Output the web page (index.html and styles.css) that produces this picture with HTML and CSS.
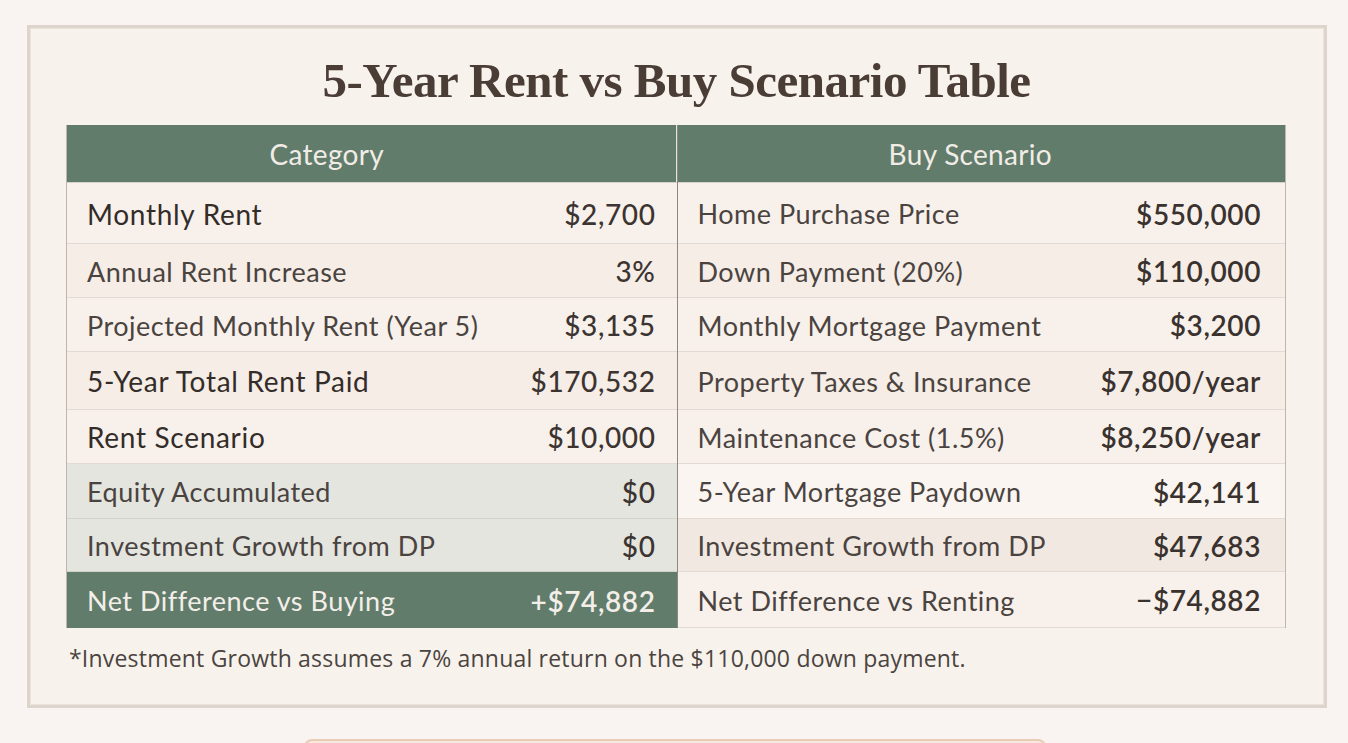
FILE: index.html
```html
<!DOCTYPE html>
<html lang="en">
<head>
<meta charset="utf-8">
<title>5-Year Rent vs Buy Scenario Table</title>
<link rel="stylesheet" href="styles.css">
</head>
<body>
<main class="card">
  <h1 class="title">5-Year Rent vs Buy Scenario Table</h1>
  <div class="table">
    <div class="col col-left">
      <div class="head">Category</div>
      <div class="row h61 strong"><span>Monthly Rent</span><span class="val">$2,700</span></div>
      <div class="row h54 alt"><span>Annual Rent Increase</span><span class="val">3%</span></div>
      <div class="row h54"><span>Projected Monthly Rent (Year 5)</span><span class="val">$3,135</span></div>
      <div class="row h58 strong alt"><span>5-Year Total Rent Paid</span><span class="val">$170,532</span></div>
      <div class="row h54 strong"><span>Rent Scenario</span><span class="val">$10,000</span></div>
      <div class="row h55 sage"><span>Equity Accumulated</span><span class="val">$0</span></div>
      <div class="row h53 sage"><span>Investment Growth from DP</span><span class="val">$0</span></div>
      <div class="row h56 green"><span>Net Difference vs Buying</span><span class="val">+$74,882</span></div>
    </div>
    <div class="col col-right">
      <div class="head">Buy Scenario</div>
      <div class="row h61"><span>Home Purchase Price</span><span class="val">$550,000</span></div>
      <div class="row h54 alt"><span>Down Payment (20%)</span><span class="val">$110,000</span></div>
      <div class="row h54"><span>Monthly Mortgage Payment</span><span class="val">$3,200</span></div>
      <div class="row h58 alt"><span>Property Taxes &amp; Insurance</span><span class="val">$7,800/year</span></div>
      <div class="row h54"><span>Maintenance Cost (1.5%)</span><span class="val">$8,250/year</span></div>
      <div class="row h55 light"><span>5-Year Mortgage Paydown</span><span class="val">$42,141</span></div>
      <div class="row h53 beige"><span>Investment Growth from DP</span><span class="val">$47,683</span></div>
      <div class="row h56"><span>Net Difference vs Renting</span><span class="val">&minus;$74,882</span></div>
    </div>
  </div>
  <p class="note">*Investment Growth assumes a 7% annual return on the $110,000 down payment.</p>
</main>
<div class="next-box"></div>
</body>
</html>
```

FILE: styles.css
```css
* { box-sizing: border-box; }

html, body {
  margin: 0;
  padding: 0;
  background: #f9f4f1;
  height: 743px;
  overflow: hidden;
}

body {
  font-family: Lato, "Open Sans", sans-serif;
  color: #3d3531;
}

.card {
  margin: 25px 0 0 27px;
  width: 1300px;
  height: 683px;
  background: #f8f2ec;
  border: 3px solid #ddd5cc;
  box-shadow: inset 0 0 0 1px #ebe4dc;
  padding: 0 37px 0 36px;
}

.title {
  margin: 0;
  padding-top: 23px;
  height: 97px;
  text-align: center;
  font-family: "Liberation Serif", "Times New Roman", serif;
  font-weight: 700;
  font-size: 49px;
  letter-spacing: -0.5px;
  line-height: 60px;
  color: #4a3d36;
}

.table {
  display: flex;
  width: 1220px;
  border-left: 1px solid #bdb6ae;
  border-right: 1px solid #bdb6ae;
}

.col-left { width: 611px; border-right: 1px solid #8d8782; }
.col-right { width: 608px; }

.head {
  height: 58px;
  background: #627c6c;
  color: #f1ede6;
  font-size: 28px;
  letter-spacing: 0.3px;
  display: flex;
  align-items: center;
  justify-content: center;
  border-bottom: 1px solid #d6d2c8;
}

.col-left .head { box-shadow: inset -1px 0 0 #e8e4dc; padding-right: 90px; }
.col-right .head { padding-right: 22px; }

.row {
  display: flex;
  align-items: center;
  justify-content: space-between;
  padding: 1px 21px 0 20px;
  font-size: 27px;
  letter-spacing: 0.5px;
  color: #4a4340;
  background: #f8f1eb;
  border-bottom: 1px solid #e3dbd3;
}

.col-right .row { padding: 1px 24px 0 20px; }

.row.alt { background: #f5ede6; }
.row.light { background: #faf5f0; }
.row.beige { background: #f1e9e1; }

.row .val {
  color: #3a322e;
  font-size: 28px;
  letter-spacing: 0.6px;
  font-weight: 600;
}
.col-left .row .val { color: #3c3431; font-weight: 500; }

.row.strong { color: #342c29; font-size: 28px; letter-spacing: 0.7px; }

.row.sage { background: #e4e5df; border-bottom-color: #d3d2cb; }

.row.green {
  background: #627c6c;
  color: #f3efe8;
  border-bottom: none;
}
.col-left .row.green .val { color: #f3efe8; font-weight: 600; }

.h61 { height: 61px; }
.h58 { height: 58px; }
.h56 { height: 56px; }
.h55 { height: 55px; }
.h54 { height: 54px; }
.h53 { height: 53px; }

.note {
  margin: 14px 0 0 3px;
  font-family: "Open Sans", sans-serif;
  font-size: 23px;
  letter-spacing: 0.2px;
  color: #4b4440;
}

.next-box {
  margin: 31px 0 0 304px;
  width: 742px;
  height: 40px;
  border: 2px solid #e6cdb4;
  border-radius: 8px;
  background: #f8e9dc;
}
```
